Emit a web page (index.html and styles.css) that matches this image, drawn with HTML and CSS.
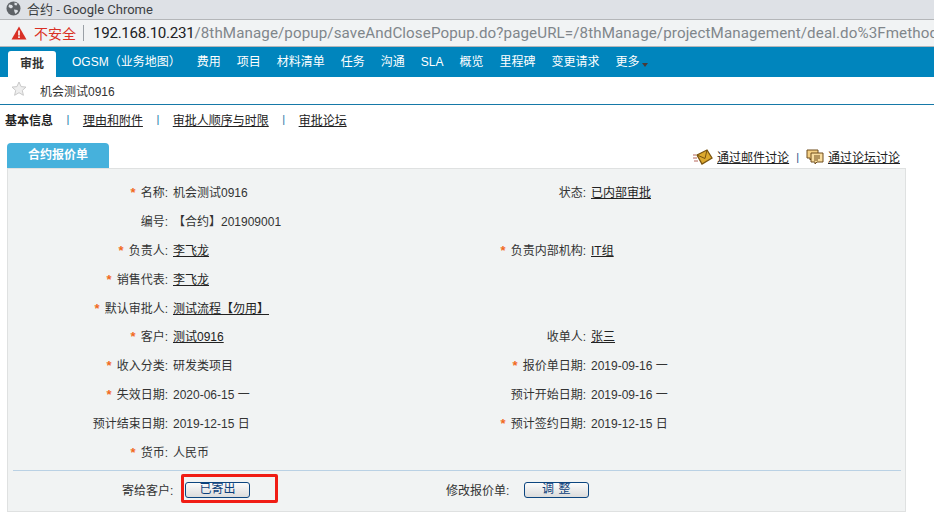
FILE: index.html
```html
<!DOCTYPE html>
<html lang="zh">
<head>
<meta charset="utf-8">
<title>合约</title>
<link rel="stylesheet" href="styles.css">
</head>
<body>
<header class="titlebar">
  <svg class="globe" width="15" height="15" viewBox="0 0 15 15"><circle cx="7.5" cy="7.5" r="7" fill="#5f6368"/><path d="M3 3.500l3 .5 1 2-2 1.500-2.500-1.500zM8 8.500l3.500.5.500 1.500-2.500 2.500-1-2zM8.500 1.500l3 1-1 2-2-.5z" fill="#dee1e6"/></svg>
  <span>合约 - Google Chrome</span>
</header>
<div class="addressbar">
  <svg class="warn" width="16" height="14" viewBox="0 0 16 14"><path d="M8 0.500L15.500 13.500H0.500z" fill="#d93025"/><rect x="7.200" y="4.500" width="1.600" height="5" fill="#fff"/><rect x="7.200" y="10.300" width="1.600" height="1.700" fill="#fff"/></svg>
  <span class="insecure">不安全</span>
  <span class="divider"></span>
  <span class="url"><span class="host">192.168.10.231</span>/8thManage/popup/saveAndClosePopup.do?pageURL=/8thManage/projectManagement/deal.do%3Fmethod%3D</span>
</div>
<nav class="mainnav">
  <a class="navtab active">审批</a>
  <a class="navitem wide">OGSM（业务地图）</a>
  <a class="navitem">费用</a>
  <a class="navitem">项目</a>
  <a class="navitem">材料清单</a>
  <a class="navitem">任务</a>
  <a class="navitem">沟通</a>
  <a class="navitem">SLA</a>
  <a class="navitem">概览</a>
  <a class="navitem">里程碑</a>
  <a class="navitem">变更请求</a>
  <a class="navitem">更多<i class="caret"></i></a>
</nav>
<div class="titlerow">
  <svg class="star" width="16" height="15" viewBox="0 0 16 15"><path d="M8 1l2.100 4.600 4.900.5-3.700 3.300 1.100 4.900L8 11.700l-4.400 2.600 1.100-4.900L1 6.100l4.900-.5z" fill="#eee" stroke="#c9c9c9"/></svg>
  <span>机会测试0916</span>
</div>
<div class="subnav">
  <b>基本信息</b><i class="sep">|</i><a>理由和附件</a><i class="sep">|</i><a>审批人顺序与时限</a><i class="sep">|</i><a>审批论坛</a>
</div>
<div class="tabrow">
  <div class="tab">合约报价单</div>
  <div class="discuss">
    <svg width="20" height="16" viewBox="0 0 20 16"><path d="M0 6h3M0 9h4M1 12h4" stroke="#b5655a"/><path d="M4 6L14 1l5 8-10 6z" fill="#dca92e" stroke="#7a5410" stroke-width="1.300"/><path d="M4 6l8 3.500L14 1" fill="none" stroke="#7a5410"/></svg>
    <a>通过邮件讨论</a>
    <i class="sep2">|</i>
    <svg width="18" height="16" viewBox="0 0 18 16"><path d="M1 1h11v8H6l-2 2V9H1z" fill="#f4cf84" stroke="#6e4d1c"/><path d="M5 4h12v9h-6l-2 2v-2H5z" fill="#f8dc9e" stroke="#6e4d1c"/><path d="M8 7h6M8 9h6M8 11h4" stroke="#6e4d1c"/></svg>
    <a>通过论坛讨论</a>
  </div>
</div>
<main class="panel">
  <div class="grid">
    <div class="l"><em>*</em>名称:</div><div class="v">机会测试0916</div><div class="l">状态:</div><div class="v"><a>已内部审批</a></div>
    <div class="l">编号:</div><div class="v">【合约】201909001</div><div class="l"></div><div class="v"></div>
    <div class="l"><em>*</em>负责人:</div><div class="v"><a>李飞龙</a></div><div class="l"><em>*</em>负责内部机构:</div><div class="v"><a>IT组</a></div>
    <div class="l"><em>*</em>销售代表:</div><div class="v"><a>李飞龙</a></div><div class="l"></div><div class="v"></div>
    <div class="l"><em>*</em>默认审批人:</div><div class="v"><a>测试流程【勿用】</a></div><div class="l"></div><div class="v"></div>
    <div class="l"><em>*</em>客户:</div><div class="v"><a>测试0916</a></div><div class="l">收单人:</div><div class="v"><a>张三</a></div>
    <div class="l"><em>*</em>收入分类:</div><div class="v">研发类项目</div><div class="l"><em>*</em>报价单日期:</div><div class="v">2019-09-16 一</div>
    <div class="l"><em>*</em>失效日期:</div><div class="v">2020-06-15 一</div><div class="l">预计开始日期:</div><div class="v">2019-09-16 一</div>
    <div class="l">预计结束日期:</div><div class="v">2019-12-15 日</div><div class="l"><em>*</em>预计签约日期:</div><div class="v">2019-12-15 日</div>
    <div class="l"><em>*</em>货币:</div><div class="v">人民币</div><div class="l"></div><div class="v"></div>
  </div>
  <div class="actions">
    <span class="alabel first">寄给客户:</span>
    <span class="btnwrap"><button class="btn">已寄出</button><span class="redbox"></span></span>
    <span class="alabel second">修改报价单:</span>
    <button class="btn spaced">调 整</button>
  </div>
</main>
</body>
</html>
```

FILE: styles.css
```css
* { box-sizing: border-box; }
html, body { margin: 0; padding: 0; }
body {
  width: 934px;
  height: 525px;
  overflow: hidden;
  background: #fff;
  font-family: "Liberation Sans", "Noto Sans CJK SC", sans-serif;
  font-size: 12px;
  color: #333;
}
a { color: inherit; }
i, em { font-style: normal; }

.titlebar {
  height: 19px;
  background: #dee1e6;
  display: flex;
  align-items: center;
  padding: 0 0 3px 6px;
  gap: 6px;
  font-size: 13px;
  color: #3c4043;
  font-family: "Roboto", "Noto Sans CJK SC", sans-serif;
}
.globe, .warn { flex: none; }
.addressbar {
  height: 28px;
  background: #f1f3f4;
  border-top: 1px solid #b4b6b9;
  border-bottom: 1px solid #b4b6b9;
  display: flex;
  align-items: center;
  padding-left: 11px;
  white-space: nowrap;
  overflow: hidden;
}
.insecure { margin-left: 7px; color: #d93025; font-size: 14px; flex: none; }
.divider { width: 1px; height: 16px; background: #9aa0a6; margin: 0 9px 0 7px; flex: none; }
.url { font-size: 15.150px; color: #80868b; font-family: "Roboto", sans-serif; letter-spacing: 0.100px; }
.host { color: #202124; letter-spacing: -0.300px; }

.mainnav {
  height: 30px;
  background: #0085bd;
  display: flex;
  align-items: flex-end;
  padding-left: 8px;
  color: #fff;
  white-space: nowrap;
}
.navtab {
  width: 48px;
  height: 26px;
  background: #fff;
  color: #333;
  border-radius: 3px 3px 0 0;
  font-weight: bold;
  text-align: center;
  line-height: 26px;
  margin-right: 16px;
}
.navitem {
  height: 30px;
  line-height: 30px;
  margin-right: 16px;
}
.caret {
  display: inline-block;
  margin-left: 2px;
  vertical-align: -1px;
  border-style: solid;
  border-width: 4px 3px 0;
  border-color: #4a3a36 transparent transparent;
}

.titlerow {
  height: 28px;
  border-bottom: 1px solid #1679a8;
  display: flex;
  align-items: center;
  padding-left: 11px;
  gap: 13px;
  color: #333;
}
.titlerow svg { margin-top: -4px; }
.subnav {
  height: 28px;
  padding-left: 5px;
  display: flex;
  align-items: center;
  color: #222;
}
.subnav a { text-decoration: underline; }
.sep { color: #1679a8; margin: 0 13.500px; font-size: 11px; }

.tabrow {
  height: 35px;
  margin: 0 34px 0 7px;
  display: flex;
  justify-content: space-between;
  align-items: flex-end;
}
.tab {
  width: 102px;
  height: 25px;
  background: #46b1dc;
  border-radius: 4px 4px 0 0;
  color: #fff;
  font-weight: bold;
  text-align: center;
  line-height: 24px;
}
.discuss {
  display: flex;
  align-items: center;
  height: 25px;
  align-self: flex-start;
  margin-top: 11px;
  color: #222;
}
.discuss a { text-decoration: underline; margin-left: 4px; }
.sep2 { color: #1f4f88; margin: 0 7px; font-size: 11px; }

.panel {
  width: 899px;
  height: 344px;
  margin-left: 7px;
  background: #f1f3f3;
  border: 1px solid #dfe1e1;
  padding-top: 8px;
  display: flex;
  flex-direction: column;
}
.grid {
  display: grid;
  grid-template-columns: 160px 248px 160px 1fr;
  grid-auto-rows: 28.900px;
  column-gap: 5px;
  align-items: center;
  height: 289px;
}
.l { text-align: right; white-space: nowrap; }
.l em {
  color: #f26a1b;
  font-size: 13px;
  font-weight: bold;
  margin-right: 5px;
}
.v { white-space: nowrap; color: #333; }
.v a { text-decoration: underline; color: #222; }

.actions {
  margin: 4px 4px 0 5px;
  border-top: 1px solid #bad1e4;
  padding-top: 10px;
  display: flex;
  align-items: center;
}
.alabel { white-space: nowrap; flex: none; }
.first { margin-left: 109px; width: 63px; }
.btnwrap { position: relative; display: inline-flex; }
.second { margin-left: 196px; width: 65px; }
.btn {
  width: 65px;
  height: 16px;
  padding: 0;
  margin: 0;
  border: 1px solid #0c457f;
  border-radius: 3px;
  background: linear-gradient(#fbfbfb, #dcdcdc);
  color: #0c3f7a;
  font: 12px "Liberation Sans", "Noto Sans CJK SC", sans-serif;
  line-height: 13px;
}
.spaced { margin-left: 13px; letter-spacing: 0.500px; }
.redbox {
  position: absolute;
  left: -4px;
  top: -8px;
  width: 97px;
  height: 29px;
  border: 3px solid #f01c14;
  border-radius: 2px;
}
```
